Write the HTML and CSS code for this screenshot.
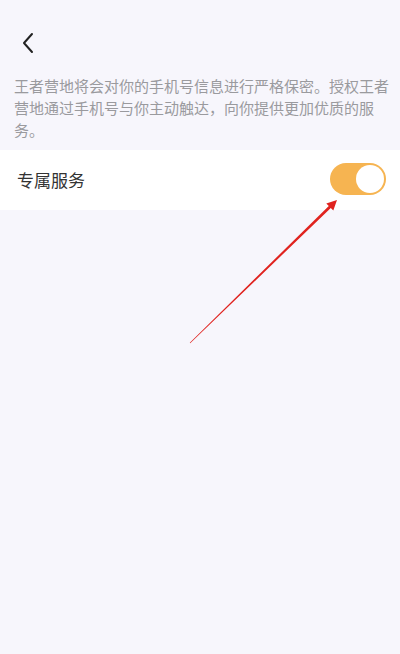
FILE: index.html
```html
<!DOCTYPE html>
<html lang="zh-CN">
<head>
<meta charset="utf-8">
<title>专属服务</title>
<link rel="stylesheet" href="styles.css">
</head>
<body>
<div class="page">
  <header class="topbar">
    <svg class="back" width="14" height="22" viewBox="0 0 14 22" aria-hidden="true">
      <polyline points="11,2 3,11 11,20" fill="none" stroke="#222" stroke-width="2" stroke-linecap="round" stroke-linejoin="round"/>
    </svg>
  </header>
  <p class="notice">王者营地将会对你的手机号信息进行严格保密。授权王者营地通过手机号与你主动触达，向你提供更加优质的服务。</p>
  <div class="row">
    <span class="label">专属服务</span>
    <span class="toggle"><span class="knob"></span></span>
  </div>
  <svg class="arrow" width="400" height="654" viewBox="0 0 400 654" aria-hidden="true">
    <polygon points="189.8,342.8 328.8,205.9 326.3,203.4 337,200 333.3,210.6 330.8,208.1 190.2,343.2" fill="#e0231f"/>
  </svg>
</div>
</body>
</html>
```
FILE: styles.css
```css
html, body {
  margin: 0;
  padding: 0;
  background: #f7f6fc;
}
.page {
  position: relative;
  width: 400px;
  height: 654px;
  overflow: hidden;
  font-family: "Noto Sans CJK SC", "Noto Sans", sans-serif;
}
.topbar {
  height: 75px;
  padding: 32px 0 0 21px;
  box-sizing: border-box;
}
.back {
  display: block;
}
.notice {
  margin: 0;
  padding: 0 10px 9px 14px;
  font-size: 15px;
  line-height: 22px;
  color: #9a9a9e;
}
.row {
  height: 60px;
  background: #ffffff;
  display: flex;
  align-items: center;
  justify-content: space-between;
  padding: 0 14px 0 17px;
}
.label {
  font-size: 17px;
  color: #333333;
  margin-top: -2px;
}
.toggle {
  width: 56px;
  height: 32px;
  border-radius: 16px;
  background: #f6b451;
  display: flex;
  align-items: center;
  justify-content: flex-end;
  padding: 0 2px;
  box-sizing: border-box;
  margin-top: -2px;
}
.knob {
  width: 28px;
  height: 28px;
  border-radius: 50%;
  background: #ffffff;
}
.arrow {
  position: absolute;
  left: 0;
  top: 0;
  pointer-events: none;
}
```
